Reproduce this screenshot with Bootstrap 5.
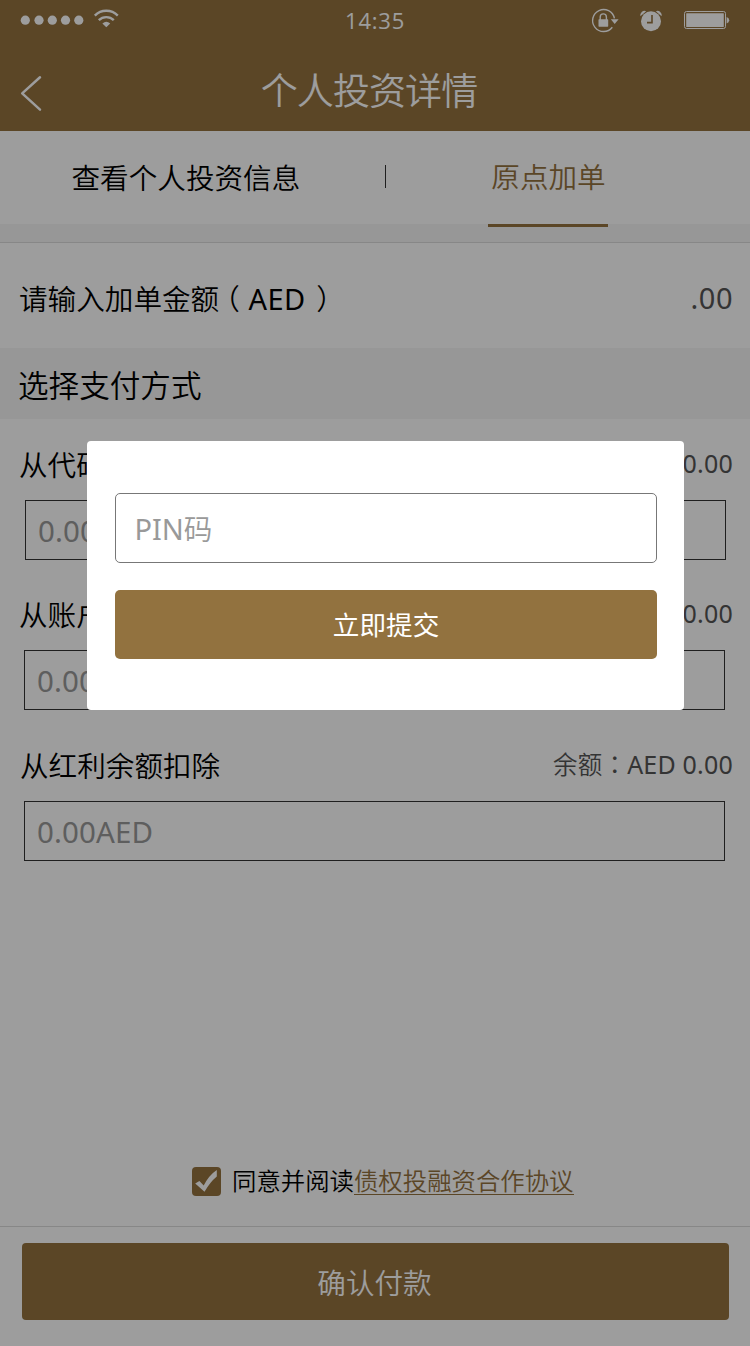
<!DOCTYPE html>
<html lang="zh-CN">
<head>
<meta charset="utf-8">
<meta name="viewport" content="width=device-width, initial-scale=1">
<title>个人投资详情</title>
<link href="https://cdn.jsdelivr.net/npm/bootstrap@5.3.0/dist/css/bootstrap.min.css" rel="stylesheet">
<style>
  :root { --gold: #94723f; }
  body { font-family: "Noto Sans", "Noto Sans CJK SC", sans-serif; color: #000; font-weight: 350; }
  .screen { width: 750px; height: 1346px; background: #fff; }
  .gold-bg { background: var(--gold); }
  .gold-text { color: var(--gold); }
  .status-bar { height: 40px; padding: 0 20px; }
  .clock { font-family: "Open Sans", sans-serif; font-weight: 400; font-size: 22px; line-height: 40px; letter-spacing: .8px; left: 345px; top: 0; }
  .title-bar { height: 91px; }
  .title-bar h1 { font-size: 37px; letter-spacing: -.9px; line-height: 101px; font-weight: 350; padding-right: 12px; }
  .tabs-row { height: 93px; font-size: 28.6px; line-height: 94px; }
  .tab-info { width: 300px; padding-left: 71.5px; }
  .tab-rule { width: 1px; height: 23px; background: #333; margin: 34px 102px 0 85px; }
  .tab-add { width: 120px; height: 96px; border-bottom: 3px solid var(--gold); padding-left: 1px; line-height: 92px; }
  .strip { height: 19px; background: #f5f5f5; border-bottom: 1px solid #dbdbdb; }
  .amount-row { height: 105px; padding: 0 17px 0 19px; font-size: 28.6px; line-height: 111px; }
  .latin { font-size: 29px; font-weight: 400; letter-spacing: .5px; }
  .total { color: #555; line-height: 110px; }
  .paren { font-feature-settings: "halt"; margin-left: 6.5px; margin-right: 8.5px; }
  .paren-end { font-feature-settings: "halt"; margin-left: 10.5px; }
  .section-head { height: 71px; background: #f5f5f5; font-size: 30.6px; line-height: 74px; padding-left: 18px; }
  .pay-item { height: 150px; padding: 0 17px 0 19px; }
  .pay-name { font-size: 28.6px; line-height: 91px; height: 81px; }
  .balance { font-family: "Noto Sans", "Noto Sans CJK TC", sans-serif; font-size: 25px; font-weight: 400; line-height: 89px; height: 81px; color: #555; letter-spacing: .2px; }
  .balance span { font-size: 24.5px; font-weight: 350; }
  .pay-field { width: 701px; height: 60px; border: 1px solid #333; border-radius: 0; font-size: 29.5px; font-weight: 400; line-height: 60px; padding: 0 12px; color: #999; background: transparent; letter-spacing: .1px; }
  .agree { margin-top: 282px; margin-bottom: 15px; height: 60px; font-size: 24.4px; line-height: 60px; padding-left: 192px; }
  .agree svg { margin-right: 11px; }
  .agree a { text-decoration: none; line-height: 27px; border-bottom: 1px solid var(--gold); }
  .pay-foot { border-top: 1px solid #dbdbdb; padding: 16px 21px 0 22px; }
  .btn-gold { background: var(--gold); color: #fff; border: 0; border-radius: 4px; padding: 0; font-weight: 350; }
  .pay-foot .btn-gold { height: 77px; font-size: 28.6px; line-height: 79px; padding-right: 2px; }
  .shade { background: rgba(0, 0, 0, .384); }
  .pin-dialog { left: 87px; top: 441px; width: 597px; height: 269px; background: #fff; border-radius: 4px; padding: 52.4px 27.3px 0 28.4px; }
  .pin-field { height: 70px; border: 1px solid #777; border-radius: 5px; font-size: 29px; line-height: 70px; padding: 0 18px; color: #999; font-weight: 400; }
  .pin-field span { font-size: 28.6px; font-weight: 350; }
  .pin-dialog .btn-gold { background: #92723f; margin-top: 26.2px; height: 69.6px; font-size: 26.6px; line-height: 71px; font-weight: 400; border-radius: 5px; }
</style>
</head>
<body>
<div class="screen position-relative overflow-hidden">
  <header class="gold-bg text-white">
    <div class="status-bar position-relative d-flex align-items-center">
      <svg width="100" height="40" viewBox="20 0 100 40" fill="#fff">
        <circle cx="25.3" cy="20.2" r="4.6"/><circle cx="39" cy="20.2" r="4.6"/><circle cx="52.3" cy="20.2" r="4.6"/><circle cx="65.5" cy="20.2" r="4.6"/><circle cx="78.8" cy="20.2" r="4.6"/>
        <path d="M94.8 15.6a16.2 16.2 0 0 1 23 0M98.8 20.2a10.6 10.6 0 0 1 15 0" fill="none" stroke="#fff" stroke-width="2.4"/>
        <path d="M102.4 23.4q3.9-3.3 7.8 0L106.3 27.3z"/>
      </svg>
      <span class="clock position-absolute">14:35</span>
      <svg class="ms-auto" width="140" height="40" viewBox="590 0 140 40" fill="#fff">
        <path d="M614.4 18.4A11 11 0 1 0 612.3 27.3" fill="none" stroke="#fff" stroke-width="1.4"/>
        <path d="M610.8 19.3h7.8l-3.9 4.7z"/>
        <rect x="598.5" y="19.3" width="9.7" height="7.4" rx=".6"/>
        <path d="M600.2 20v-3a3.1 3.1 0 0 1 6.2 0v3" fill="none" stroke="#fff" stroke-width="1.4"/>
        <circle cx="651" cy="21.3" r="10"/>
        <path d="M640.4 16.2a4.2 4.2 0 0 1 5.8-4.9zM661.6 16.2a4.2 4.2 0 0 0-5.8-4.9z"/>
        <path d="M652 15v7.6h-5" fill="none" stroke="#94723f" stroke-width="1.6"/>
        <rect x="684.5" y="11.5" width="41" height="17" rx="2" fill="none" stroke="#fff" stroke-width="1"/>
        <rect x="686.2" y="13.2" width="37.6" height="13.8" rx=".5"/>
        <path d="M726.6 17q2.6 1 2.6 3.2t-2.6 3.2z"/>
      </svg>
    </div>
    <div class="title-bar position-relative text-center">
      <svg class="position-absolute start-0 top-0" width="60" height="91" viewBox="0 40 60 91" fill="none" stroke="#fff" stroke-width="2.5" stroke-linecap="round" stroke-linejoin="round"><path d="M40 77.3L22.2 93.4 40 109.6"/></svg>
      <h1 class="mb-0">个人投资详情</h1>
    </div>
  </header>

  <nav class="tabs-row d-flex">
    <div class="tab-info text-nowrap">查看个人投资信息</div>
    <div class="tab-rule"></div>
    <div class="tab-add text-center gold-text text-nowrap position-relative">原点加单</div>
  </nav>
  <div class="strip"></div>

  <div class="amount-row d-flex justify-content-between">
    <div>请输入加单金额<span class="paren">（</span><span class="latin">AED</span><span class="paren-end">）</span></div>
    <div class="latin total">.00</div>
  </div>
  <div class="section-head">选择支付方式</div>

  <section class="pay-item">
    <div class="d-flex justify-content-between"><div class="pay-name">从代码余额扣除</div><div class="balance" lang="zh-TW"><span>余额：</span>AED 0.00</div></div>
    <div class="form-control pay-field" style="margin-left:6px">0.00AED</div>
  </section>
  <section class="pay-item">
    <div class="d-flex justify-content-between"><div class="pay-name">从账户余额扣除</div><div class="balance" lang="zh-TW"><span>余额：</span>AED 0.00</div></div>
    <div class="form-control pay-field" style="margin-left:5px">0.00AED</div>
  </section>
  <section class="pay-item" style="padding-top:1px">
    <div class="d-flex justify-content-between"><div class="pay-name" style="padding-left:1px">从红利余额扣除</div><div class="balance" lang="zh-TW"><span>余额：</span>AED 0.00</div></div>
    <div class="form-control pay-field" style="margin-left:5px">0.00AED</div>
  </section>

  <div class="agree d-flex align-items-center text-nowrap">
    <svg width="29" height="29" viewBox="0 0 29 29"><rect width="29" height="29" rx="4" fill="#94723f"/><path d="M3.2 16.6L7.4 14l4.3 4.6Q16.8 8.3 24.8 3v6.4Q17.8 15.2 12.5 24.8z" fill="#fff"/></svg>
    <span>同意并阅读</span><a class="gold-text">债权投融资合作协议</a>
  </div>
  <footer class="pay-foot">
    <button class="btn btn-gold w-100 d-block">确认付款</button>
  </footer>

  <div class="shade position-absolute top-0 start-0 w-100 h-100"></div>
  <div class="pin-dialog position-absolute" role="dialog">
    <div class="form-control pin-field">PIN<span>码</span></div>
    <button class="btn btn-gold w-100 d-block">立即提交</button>
  </div>
</div>
<script src="https://cdn.jsdelivr.net/npm/bootstrap@5.3.0/dist/js/bootstrap.bundle.min.js"></script>
</body>
</html>
